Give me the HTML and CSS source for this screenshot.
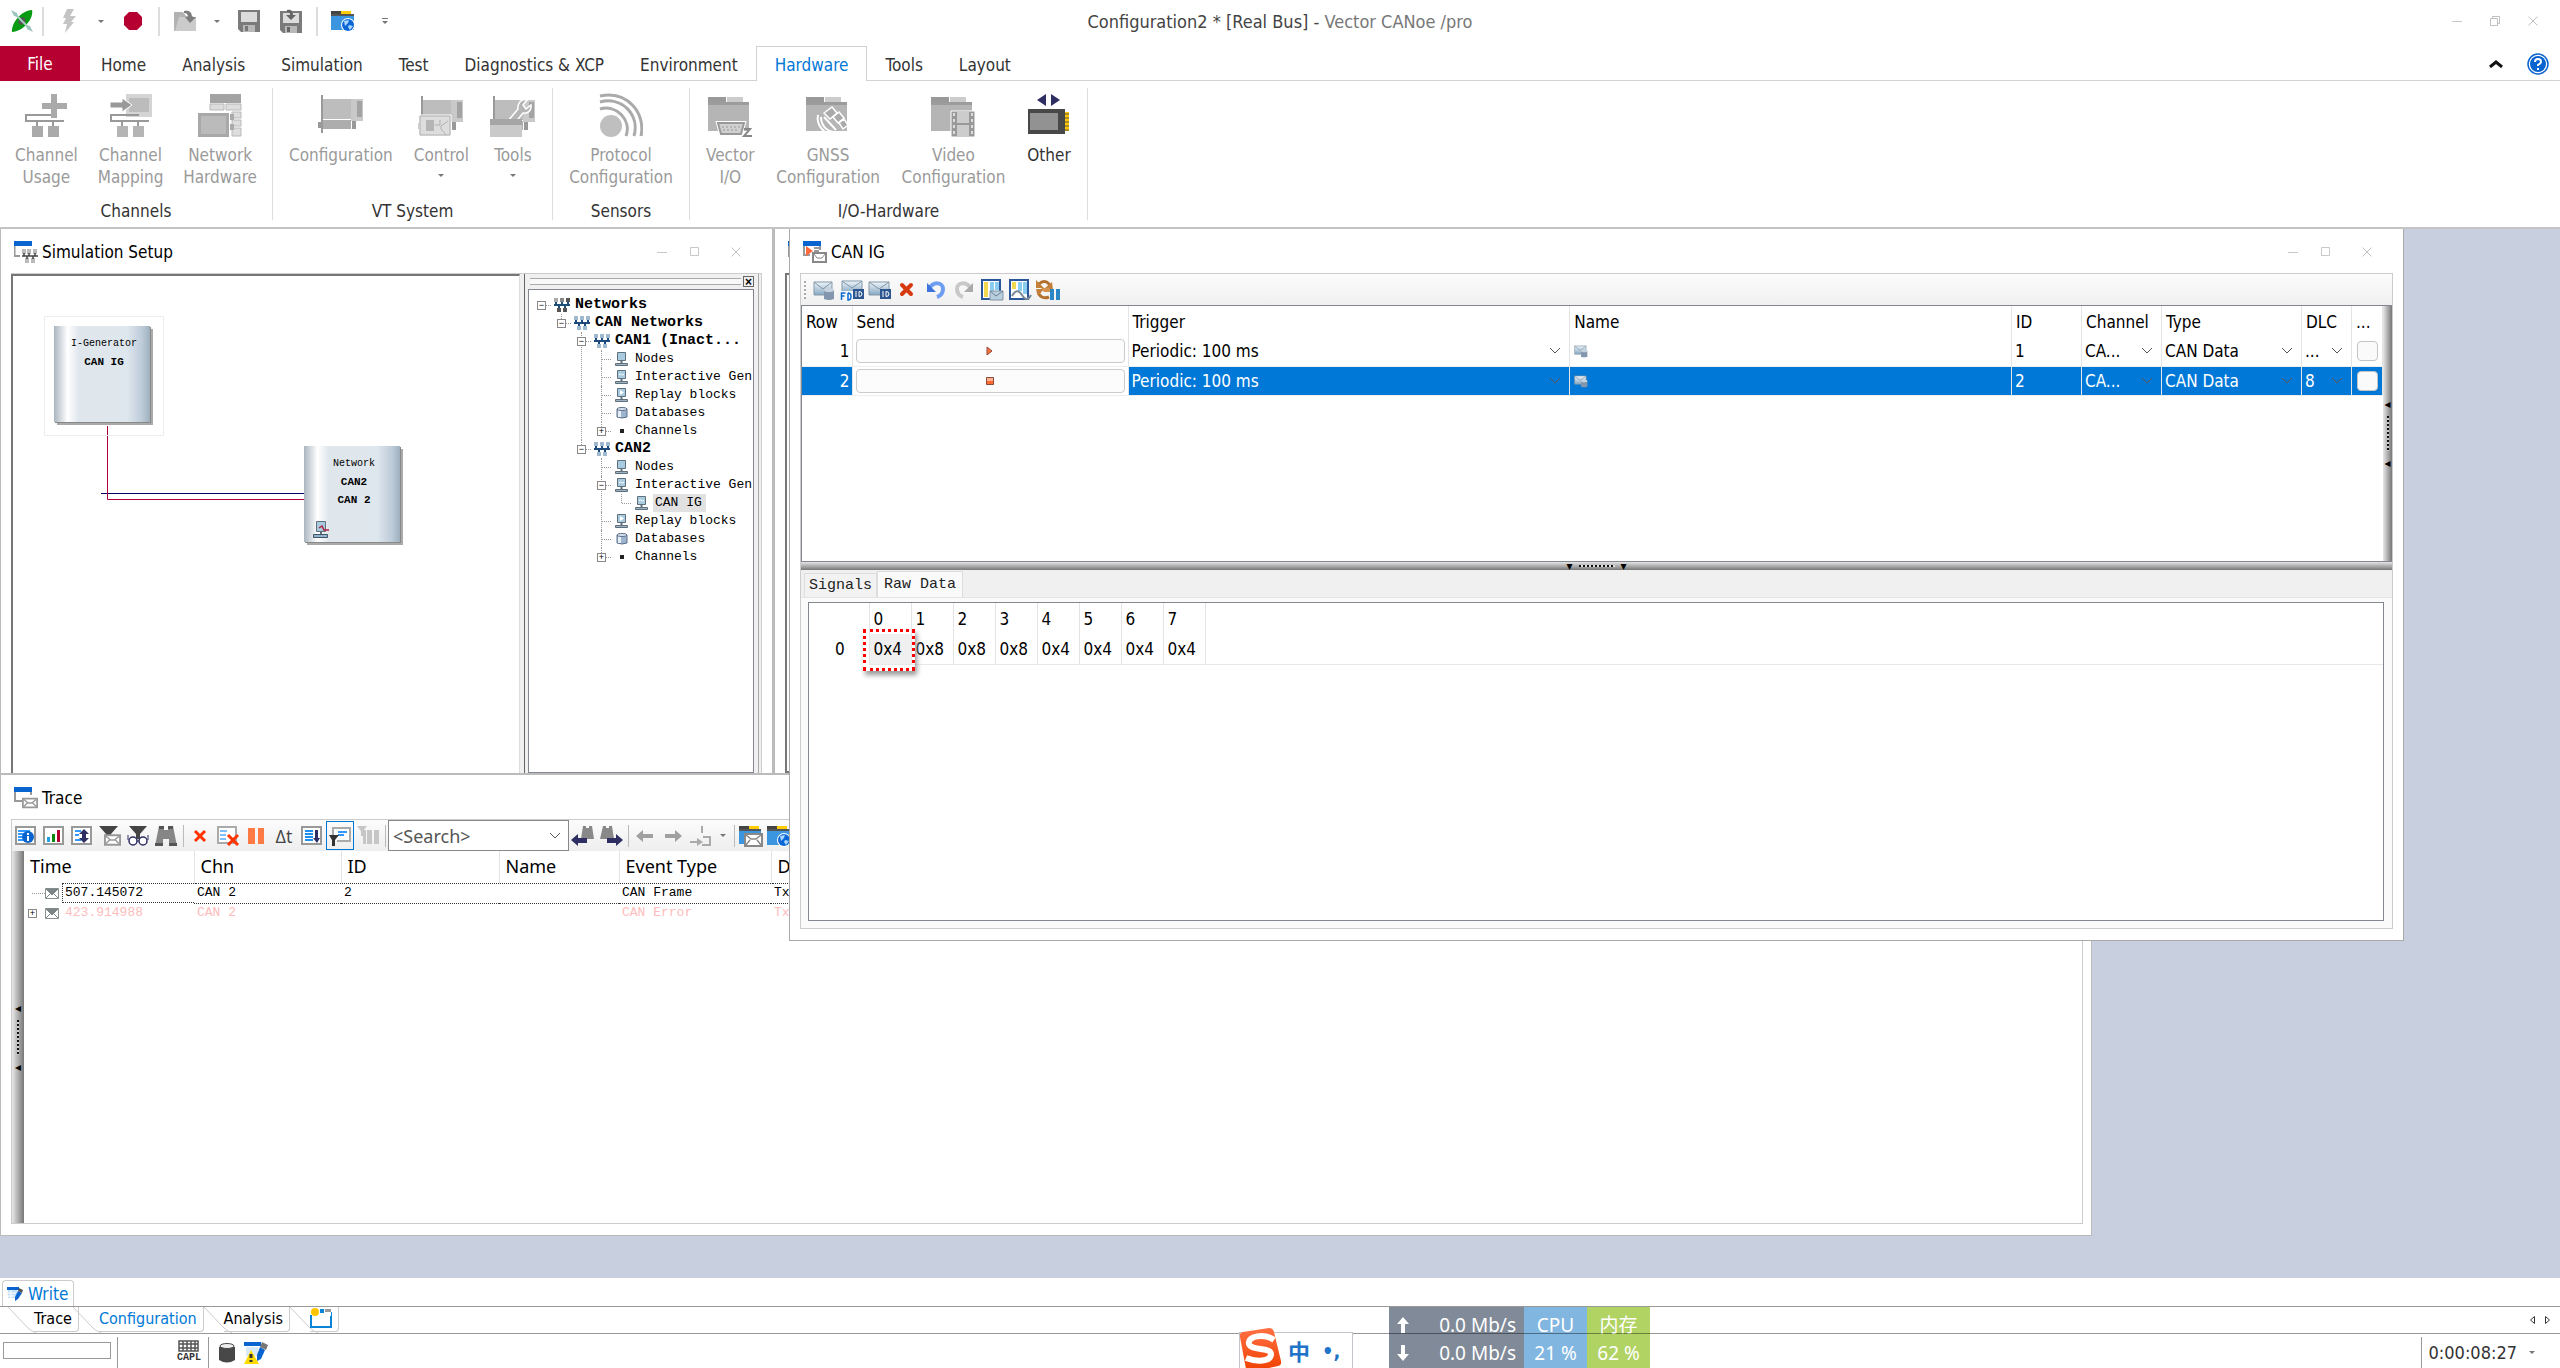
FILE: index.html
```
<!DOCTYPE html>
<html lang="en">
<head>
<meta charset="utf-8">
<title>Configuration2 * [Real Bus] - Vector CANoe /pro</title>
<link rel="stylesheet" href="styles.css">
</head>
<body>
<svg class="sprite" aria-hidden="true">
  <defs>
    <linearGradient id="g-env" x1="0" y1="0" x2="0" y2="1"><stop offset="0" stop-color="#eef5fa"/><stop offset="1" stop-color="#86a8c2"/></linearGradient>
    <linearGradient id="g-orange" x1="0" y1="0" x2="0" y2="1"><stop offset="0" stop-color="#ff7043"/><stop offset="1" stop-color="#f04000"/></linearGradient>
  </defs>
  <symbol id="i-min" viewBox="0 0 10 10"><path d="M0 5.500h10" stroke="#c8c8c8" fill="none"/></symbol>
  <symbol id="i-max" viewBox="0 0 10 10"><path d="M.5.5h8v8h-8z" stroke="#c8c8c8" fill="none"/></symbol>
  <symbol id="i-restore" viewBox="0 0 10 10"><path d="M.5 2.500h7v7h-7zM2.500 2.500v-2h7v7h-2" stroke="#c0c0c0" fill="none"/></symbol>
  <symbol id="i-close" viewBox="0 0 10 10"><path d="M.5.5l9 9M9.500.5l-9 9" stroke="#c0c0c0" fill="none"/></symbol>
  <symbol id="i-down" viewBox="0 0 8 5"><path d="M1 1h6L4 4z" fill="#777"/></symbol>
  <symbol id="i-over" viewBox="0 0 8 8"><path d="M1 1.500h6" stroke="#777"/><path d="M1 4h6L4 7z" fill="#777"/></symbol>
  <symbol id="i-chev" viewBox="0 0 12 8"><path d="M1 1l5 5 5-5" stroke="#555" fill="none"/></symbol>
  <symbol id="i-mail" viewBox="0 0 18 12"><path d="M1 1h16v10H1z" fill="#fff" stroke="#999" stroke-width="2"/><path d="M2 2l5 4h4l5-4M2 10l4-4M16 10l-4-4" fill="none" stroke="#999" stroke-width="1.500"/></symbol>

  <symbol id="i-kayak" viewBox="0 0 22 22"><path d="M21 0C23 8 13 21 1 22 0 14 9 1 21 0z" fill="#089a12"/><ellipse cx="11" cy="11" rx="3" ry="4" transform="rotate(40 11 11)" fill="#555"/><path d="M4 4l14 14" stroke="#a9c9c4" stroke-width="2"/><path d="M0 0l6 3 1 4-4-1zM22 22l-6-3-1-4 4 1z" fill="#9cc5bd"/></symbol>
  <symbol id="i-bolt" viewBox="0 0 16 24"><path d="M6 0h7l-4 7h6l-5 6h3L4 24l2-9H2l3-6H2z" fill="#c4c4c4"/></symbol>
  <symbol id="i-stop" viewBox="0 0 20 20"><path d="M6 1h8l5 5v8l-5 5H6l-5-5V6z" fill="#b70032"/></symbol>
  <symbol id="i-open" viewBox="0 0 24 22"><path d="M1 2h9l3 4h7v15H1z" fill="#b2b2b2"/><path d="M2 21L6 7h17v14z" fill="#cbcbcb"/><path d="M11 1c6-1 8 2 8 6h4l-6 6-5-6h3c0-2-1-4-4-4z" fill="#7d7d7d"/></symbol>
  <symbol id="i-save" viewBox="0 0 22 22"><path d="M0 0h22v22H3l-3-3z" fill="#7b7b7b"/><path d="M3 2h16v10H3z" fill="#dcdcdc"/><path d="M5 15h12v7H5z" fill="#b8b8b8"/><path d="M7 16h3v5H7z" fill="#777"/></symbol>
  <symbol id="i-saveas" viewBox="0 0 22 24"><path d="M0 2h22v22H3l-3-3z" fill="#7b7b7b"/><path d="M3 4h16v10H3z" fill="#dcdcdc"/><path d="M5 17h12v7H5z" fill="#b8b8b8"/><path d="M7 18h3v5H7zM7 1c5-1 6 2 6 5h3l-5 5-5-5h4c0-2 0-3-3-3z" fill="#666"/></symbol>
  <symbol id="i-globe" viewBox="0 0 24 22"><path d="M0 1h10v5H0z" fill="#444"/><path d="M10 1h10v4H10z" fill="#fc0"/><path d="M0 4h23v16H0z" fill="#3c96df"/><path d="M0 4h23v2H0z" fill="#555"/><circle cx="17" cy="15" r="7" fill="#fff"/><circle cx="17" cy="15" r="6" fill="#0a66d6"/><path d="M13 11l5-1-1 3-3 3zM18 15l4 1-3 4-2-3z" fill="#a9d7ff"/></symbol>
  <symbol id="i-foldmail" viewBox="0 0 24 22"><path d="M0 1h10v5H0z" fill="#444"/><path d="M10 1h10v4H10z" fill="#fc0"/><path d="M0 4h22v15H0z" fill="#3c96df"/><path d="M0 4h22v2H0z" fill="#555"/><path d="M6 9h17v12H6z" fill="#fff" stroke="#888" stroke-width="2"/><path d="M7 10l5 4h5l5-4M7 20l4-5M22 20l-4-5" fill="none" stroke="#888" stroke-width="1.500"/></symbol>

  <symbol id="r-usage" viewBox="0 0 44 44"><path d="M2 29v-7h28M2 28h38M13 28v6M29 28v6" stroke="#999" stroke-width="2" fill="none"/><path d="M8 33h11v11H8zM24 33h11v11H24zM27 1h6v9h10v6H33v9h-6v-9H18v-6h9z" fill="#aaa"/></symbol>
  <symbol id="r-map" viewBox="0 0 44 44"><path d="M17 1h26v23H17z" fill="#d4d4d4"/><path d="M20 5h20v14H20z" fill="#bcbcbc"/><path d="M1 9h12V5l10 7-10 7v-4H1z" fill="#999" stroke="#fff" stroke-width="1"/><path d="M2 29v-7h28M2 28h38M13 28v6M29 28v6" stroke="#999" stroke-width="2" fill="none"/><path d="M8 33h11v11H8zM24 33h11v11H24z" fill="#b5b5b5"/></symbol>
  <symbol id="r-nethw" viewBox="0 0 44 44"><path d="M12 1h31v9H12z" fill="#a3a3a3"/><path d="M12 11h14v6H12zM28 11h15v6H28zM34 19h9v6h-9zM34 27h9v6h-9zM34 35h9v8h-9z" fill="#ddd" stroke="#b9b9b9"/><path d="M0 20h31v24H0z" fill="#a9a9a9"/><path d="M3 23h25v18H3z" fill="#bbb"/><path d="M32 21h4v6h-4zM32 31h4v6h-4z" fill="#aaa"/></symbol>
  <symbol id="r-card" viewBox="0 0 46 40"><path d="M4 0v38" stroke="#999" stroke-width="2"/><path d="M5 4h28v20H5z" fill="#bdbdbd"/><path d="M33 4h12v22H33z" fill="#c9c9c9"/><path d="M39 6h5v16h-5z" fill="#a3a3a3"/><path d="M5 25h28v9H5z" fill="#adadad"/><path d="M34 26h4v8h-4zM0 27h4v6H0z" fill="#999"/></symbol>
  <symbol id="r-control" viewBox="0 0 46 44"><use href="#r-card" width="46" height="40" y="3"/><path d="M1 22h32v21H1z" fill="#ddd" stroke="#fff"/><path d="M2 23h30v19H2z" fill="#ddd" stroke="#b0b0b0"/><path d="M8 27h8v11H8z" fill="#b5b5b5"/><path d="M17 32h5v-5M30 28l-7 5v3l5 6" fill="none" stroke="#b0b0b0"/></symbol>
  <symbol id="r-tools" viewBox="0 0 46 44"><use href="#r-card" width="46" height="40" y="3"/><path d="M18 28l10-12c-1-6 4-11 9-9l-4 5 3 4 5-4c1 6-4 9-8 8L24 31z" fill="#b5b5b5" stroke="#fff" stroke-width="1.500"/><path d="M0 26h32v18H0z" fill="#c9c9c9"/><path d="M0 26h32v6H0z" fill="#a5a5a5"/></symbol>
  <symbol id="r-sensor" viewBox="0 0 44 44"><circle cx="12" cy="33" r="11" fill="#bfbfbf"/><path d="M1 16c16-5 32 11 26 27M1 9c22-6 40 13 34 34M1 3c28-6 46 18 41 40" fill="none" stroke="#aaa" stroke-width="3"/></symbol>
  <symbol id="r-fold" viewBox="0 0 44 44"><path d="M0 4h18v6H0z" fill="#999"/><path d="M19 4h16v6H19z" fill="#ccc"/><path d="M0 9h41v29H0z" fill="#b5b5b5"/><path d="M0 9h41v3H0z" fill="#9c9c9c"/></symbol>
  <symbol id="r-vio" viewBox="0 0 44 44"><use href="#r-fold" width="44" height="44"/><path d="M10 30h26l-3 11H13z" fill="#d0d0d0" stroke="#fff" stroke-width="4"/><path d="M10 30h26l-3 11H13z" fill="#d0d0d0" stroke="#999" stroke-width="2"/><path d="M14 34h18M15 37h16" stroke="#999" stroke-dasharray="2 2"/><path d="M36 36h6l-6 7h8" fill="none" stroke="#888" stroke-width="2"/></symbol>
  <symbol id="r-gnss" viewBox="0 0 44 44"><use href="#r-fold" width="44" height="44"/><path d="M12 22c-2 10 6 20 17 20M15 24c0 8 5 14 13 15M18 24l12 13" fill="none" stroke="#fff" stroke-width="2"/><path d="M18 20l8-6 5 6-7 6zM27 24l6-5 5 6-6 5zM33 30l5-4 4 6-5 4z" fill="#aaa" stroke="#fff" stroke-width="1.500"/></symbol>
  <symbol id="r-video" viewBox="0 0 44 44"><use href="#r-fold" width="44" height="44"/><path d="M20 18h24v26H20z" fill="#999" stroke="#fff"/><path d="M26 19h12v11H26zM26 32h12v11H26z" fill="#ccc"/><path d="M23 20v24M41 20v24" stroke="#ddd" stroke-width="2" stroke-dasharray="3 3"/></symbol>
  <symbol id="r-other" viewBox="0 0 44 44"><path d="M19 1v12l-9-6zM24 1v12l9-6z" fill="#2e2e63"/><path d="M1 16h37v25H1z" fill="#484848"/><path d="M3 20h28v17H3z" fill="#929292"/><path d="M38 19h4v19h-4z" fill="#ffc800"/><path d="M38 21h4M38 25h4M38 29h4M38 33h4M38 37h4" stroke="#555"/></symbol>

  <symbol id="w-sim" viewBox="0 0 24 22"><path d="M.5 4v11H6" stroke="#999" fill="none" stroke-width="2"/><path d="M0 0h18v5H0z" fill="#0a64cf"/><path d="M8 8h4v5H8zM13 8h4v5h-4zM19 8h4v5h-4zM11 17h4v5h-4zM17 17h4v5h-4z" fill="#bbb"/><path d="M8 15h16M10 12v3M15 12v3M21 12v3M13 15v3M19 15v3" stroke="#444" stroke-width="1.500"/></symbol>
  <symbol id="w-trace" viewBox="0 0 24 22"><path d="M1 4v10h7M17 4v4" stroke="#999" fill="none" stroke-width="2"/><path d="M0 0h18v5H0z" fill="#0a64cf"/><use href="#i-mail" x="8" y="10" width="16" height="12"/></symbol>
  <symbol id="w-ig" viewBox="0 0 24 22"><path d="M1 4v10h6M17 4v5M11 7h5M11 10h5" stroke="#999" fill="none" stroke-width="2"/><path d="M0 0h18v5H0z" fill="#0a64cf"/><path d="M3 5l7 5-7 5z" fill="#ff6a3c"/><path d="M10 12h13v9H10z" fill="#fff" stroke="#888" stroke-width="2"/><path d="M11 13l3 4h5l3-4" fill="none" stroke="#888"/></symbol>

  <symbol id="t-net0" viewBox="0 0 16 14"><path d="M0 0h4v4H0z" fill="#aaa"/><path d="M6 0h4v4H6z" fill="#888"/><path d="M12 0h4v4h-4z" fill="#555"/><path d="M3 10h4v4H3zM9 10h4v4H9z" fill="#555"/><path d="M0 7h16M2 4v3M8 4v3M14 4v3M5 7v3M11 7v3" stroke="#1d4f78" stroke-width="2"/></symbol>
  <symbol id="t-net" viewBox="0 0 16 14"><path d="M0 0h4v4H0zM6 0h4v4H6zM12 0h4v4h-4zM3 10h4v4H3zM9 10h4v4H9z" fill="#9fb9cf"/><path d="M0 7h16M2 4v3M8 4v3M14 4v3M5 7v3M11 7v3" stroke="#1d4a7c" stroke-width="2"/></symbol>
  <symbol id="t-node" viewBox="0 0 14 14"><path d="M2.500.5h8v8h-8z" fill="#a8cbe0" stroke="#5f6f7c"/><path d="M6.500 9v3" stroke="#5f6f7c" stroke-width="2"/><path d="M.5 11.500h12v2H.5z" fill="#9ab4c4" stroke="#5f6f7c"/></symbol>
  <symbol id="t-gen" viewBox="0 0 14 14"><use href="#t-node" width="14" height="14"/><path d="M4 5q1-2 2.500-.5T9 4" stroke="#fff" fill="none"/></symbol>
  <symbol id="t-play" viewBox="0 0 14 14"><use href="#t-node" width="14" height="14"/><path d="M5 2l4 2.500L5 7z" fill="#fff"/></symbol>
  <symbol id="t-db" viewBox="0 0 14 14"><path d="M2 3h10v8q-5 2-10 0z" fill="#9cb4ce" stroke="#5b6e8a"/><path d="M3 4h3v7H3z" fill="#e6eef6"/><ellipse cx="7" cy="3" rx="5" ry="1.500" fill="#dce8f2" stroke="#5b6e8a"/></symbol>
  <symbol id="t-chan" viewBox="0 0 14 14"><path d="M5 5h4v4H5z" fill="#222"/></symbol>
  <symbol id="t-graph" viewBox="0 0 18 18"><path d="M4.500 1.500h9v10h-9z" fill="#a8cbe0" stroke="#5f6f7c"/><path d="M9 12v3" stroke="#5f6f7c" stroke-width="2"/><path d="M1.500 14.500h14v3h-14z" fill="#8fb5cf" stroke="#456"/><path d="M7 8l3-2 2 4h5" stroke="#b0223b" fill="none" stroke-width="1.500"/></symbol>

  <symbol id="c-db" viewBox="0 0 24 22"><path d="M2 3h18v13H2z" fill="url(#g-env)" stroke="#8297a8"/><path d="M2 3l9 7 9-7" fill="none" stroke="#8297a8"/><path d="M12 11h10v9q-5 2-10 0z" fill="#8396ad"/><ellipse cx="17" cy="11" rx="5" ry="2" fill="#c6d2de"/></symbol>
  <symbol id="c-fd" viewBox="0 0 24 22"><path d="M2 2h20v12H2z" fill="url(#g-env)" stroke="#8297a8"/><path d="M2 2l10 7 10-7" fill="none" stroke="#8297a8"/><path d="M0 12h13v10H0z" fill="#f4f6f8"/><path d="M13 10h11v10H13z" fill="#2d5590"/><path d="M16 12v6M19 12.500v5q3 0 3-2.500t-3-2.500" stroke="#fff" fill="none"/><path d="M1.500 21v-7h4M1.500 17h3M8 14v7q3 0 3-3.500T8 14" stroke="#0a6ad0" stroke-width="1.500" fill="none"/></symbol>
  <symbol id="c-id" viewBox="0 0 24 22"><path d="M1 3h20v13H1z" fill="url(#g-env)" stroke="#8297a8"/><path d="M1 3l10 7 10-7" fill="none" stroke="#8297a8"/><path d="M12 10h11v10H12z" fill="#2d5590"/><path d="M15 12v6M18 12.500v5q3 0 3-2.500t-3-2.500" stroke="#fff" fill="none"/></symbol>
  <symbol id="c-x" viewBox="0 0 24 22"><path d="M6 6l9 9M15 6l-9 9" stroke="#d63a10" stroke-width="4" stroke-linecap="round"/></symbol>
  <symbol id="c-undo" viewBox="0 0 24 22"><path d="M5 10C9 2 19 3 19 10q0 6-6 8" fill="none" stroke="#6f9df0" stroke-width="4"/><path d="M3 4v9h9z" fill="#3d74de"/></symbol>
  <symbol id="c-redo" viewBox="0 0 24 22"><path d="M19 10C15 2 5 3 5 10q0 6 6 8" fill="none" stroke="#c8c8c8" stroke-width="4"/><path d="M21 4v9h-9z" fill="#aaa"/></symbol>
  <symbol id="c-cfg" viewBox="0 0 24 22"><path d="M2 1h18v19H2z" fill="#fff" stroke="#2b569c" stroke-width="2"/><path d="M4 3h4v15H4z" fill="#f1d84e"/><path d="M10 3h4v10h-4zM15 3h4v8h-4z" fill="#8acdf0"/><path d="M10 12h13v9H10z" fill="#b8cfdf" stroke="#8194a5"/><path d="M10 12l6 5 7-5" fill="none" stroke="#6d8192"/></symbol>
  <symbol id="c-wave" viewBox="0 0 24 22"><path d="M2 1h18v19H2z" fill="#fff" stroke="#2b569c" stroke-width="2"/><path d="M4 3h4v7H4z" fill="#f1d84e"/><path d="M10 3h4v9h-4zM15 3h4v12h-4z" fill="#8acdf0"/><path d="M4 17q5-9 10-1t9 0" fill="none" stroke="#7b8a97" stroke-width="2"/></symbol>
  <symbol id="c-cycle" viewBox="0 0 24 22"><path d="M3 5c4-4 9-3 11 2M2 12c1 6 6 8 11 6" fill="none" stroke="#b2702c" stroke-width="3"/><path d="M0 1v8h8zM16 3l1 8-8-2zM0 10h8l-6 7z" fill="#c47f38"/><path d="M5 9h8l3 4H8z" fill="#d4914c"/><path d="M14 10h4v11h-4zM20 10h4v11h-4z" fill="#2b86c5"/></symbol>

  <symbol id="a-frame" viewBox="0 0 22 20"><path d="M1 1h19v17H1z" fill="#fff" stroke="#999" stroke-width="2"/></symbol>
  <symbol id="a-info" viewBox="0 0 22 20"><use href="#a-frame" width="22" height="20"/><path d="M3 5h12M3 8h8M3 11h7M3 14h7" stroke="#39f" stroke-width="2"/><circle cx="13" cy="11" r="6" fill="#0a64cf"/><path d="M13 7v2M13 10v5" stroke="#fff" stroke-width="2"/></symbol>
  <symbol id="a-bars" viewBox="0 0 22 20"><use href="#a-frame" width="22" height="20"/><path d="M4 11h3v5H4z" fill="#1f9fe8"/><path d="M9 8h3v8H9z" fill="#0a8a10"/><path d="M14 4h3v12h-3z" fill="#b70032"/></symbol>
  <symbol id="a-updn" viewBox="0 0 22 20"><use href="#a-frame" width="22" height="20"/><path d="M4 5h6M4 9h4M4 14h6" stroke="#39f" stroke-width="2"/><path d="M13 3l5 5h-3v4h3l-5 5-5-5h3V8H8z" fill="#2e2e63"/></symbol>
  <symbol id="a-filt" viewBox="0 0 22 20"><path d="M0 0h19l-7 8v10H7V8z" fill="#444"/><use href="#i-mail" x="5" y="8" width="17" height="12"/></symbol>
  <symbol id="a-glass" viewBox="0 0 22 20"><path d="M2 0h18l-7 8v5H9V8z" fill="#444"/><circle cx="6" cy="15" r="4" fill="#fff" stroke="#2e2e63" stroke-width="1.500"/><circle cx="16" cy="15" r="4" fill="#fff" stroke="#2e2e63" stroke-width="1.500"/><path d="M1 14V9M21 14V9M10 15h2" stroke="#2e2e63"/></symbol>
  <symbol id="a-bino" viewBox="0 0 22 20"><path d="M4 0h5v4h4V0h5l4 20h-8v-7H8v7H0z" fill="#868686"/><path d="M4 0h5v3H4zM13 0h5v3h-5zM0 17h8v3H0zM14 17h8v3h-8z" fill="#555"/></symbol>
  <symbol id="a-x" viewBox="0 0 22 20"><path d="M6 5l10 10M16 5L6 15" stroke="#ff3300" stroke-width="3"/></symbol>
  <symbol id="a-clear" viewBox="0 0 22 20"><path d="M1 1h18v16H1z" fill="#fff" stroke="#aaa" stroke-width="2"/><path d="M3 5h7M3 9h6M3 13h6" stroke="#7cc0ff" stroke-width="2"/><path d="M11 9l10 10M21 9L11 19" stroke="#ff3300" stroke-width="3"/></symbol>
  <symbol id="a-pause" viewBox="0 0 22 20"><path d="M3 2h7v16H3zM13 2h6v16h-6z" fill="#ff7a45"/></symbol>
  <symbol id="a-scroll" viewBox="0 0 22 20"><use href="#a-frame" width="22" height="20"/><path d="M4 5h8M4 8h8M4 11h8M4 14h8" stroke="#1f8ff0" stroke-width="2"/><path d="M14 4h3v8h2l-3 5-4-5h2z" fill="#2e2e63"/></symbol>
  <symbol id="a-tip" viewBox="0 0 22 20"><path d="M4 9V2h17v13H8" fill="#fff" stroke="#aaa" stroke-width="2"/><path d="M9 6h9M9 9h6" stroke="#39f" stroke-width="2"/><path d="M0 9h10l-4 5v6H3v-6z" fill="#333"/></symbol>
  <symbol id="a-fpause" viewBox="0 0 22 20"><path d="M0 0h10L6 5v5H4V5zM6 4h3v14H6zM10 4h5v14h-5zM17 4h5v14h-5z" fill="#c6c6c6"/></symbol>
  <symbol id="a-prev" viewBox="0 0 24 20"><path d="M12 0h3v2h3V0h3l2 13H10z" fill="#888"/><path d="M0 14l7-6v4h9v5H7v3z" fill="#2e2e63"/></symbol>
  <symbol id="a-next" viewBox="0 0 24 20"><path d="M4 0h3v2h3V0h3l2 13H1z" fill="#888"/><path d="M24 14l-7-6v4H8v5h9v3z" fill="#2e2e63"/></symbol>
  <symbol id="a-left" viewBox="0 0 22 20"><path d="M2 10l7-6v4h10v4H9v4z" fill="#a0a0a0"/></symbol>
  <symbol id="a-right" viewBox="0 0 22 20"><path d="M20 10l-7-6v4H3v4h10v4z" fill="#a0a0a0"/></symbol>
  <symbol id="a-goto" viewBox="0 0 22 20"><path d="M12 0v7M0 16h10M13 11h7v8h-8" stroke="#aaa" stroke-width="2" fill="none"/><path d="M7 12l6 4-6 4z" fill="#aaa"/></symbol>
  <symbol id="a-env" viewBox="0 0 14 11"><path d="M.5.5h13v10H.5z" fill="#fff" stroke="#888f8f"/><path d="M1 1h12l-6 6zM1 10l4-4M13 10L9 6" fill="#7d8686" stroke="#7d8686"/></symbol>

  <symbol id="b-write" viewBox="0 0 16 14"><path d="M0 0h12v3H0z" fill="#0a64cf"/><path d="M1 3h9v8H1z" fill="#c4dff8"/><path d="M1 6h8M1 9h7M4 3v8" stroke="#fff"/><path d="M11 4l4 2-4 6-3 2v-4z" fill="#0a64cf"/><path d="M12 1l4 2-1 3-4-2z" fill="#555"/></symbol>
  <symbol id="b-new" viewBox="0 0 22 20"><path d="M1 7v12h20V5H10" fill="none" stroke="#0a84d6" stroke-width="2"/><path d="M9 3h12v5H9z" fill="#fff"/><circle cx="5" cy="4" r="4" fill="#ffc400"/><path d="M10 1h4v4h-4z" fill="#0a84d6"/><path d="M15 1h6v3h-6z" fill="#999"/></symbol>
  <symbol id="b-grid" viewBox="0 0 22 12"><path d="M1 1h19v10H1zM1 4h19M1 8h19M5 1v10M9 1v10M13 1v10M17 1v10" fill="none" stroke="#555" stroke-width="1.500"/></symbol>
  <symbol id="b-db" viewBox="0 0 16 20"><path d="M0 4v13q8 5 16 0V4z" fill="#484848"/><ellipse cx="8" cy="3" rx="7" ry="2.500" fill="#eee" stroke="#484848"/></symbol>
  <symbol id="b-warn" viewBox="0 0 24 24"><path d="M0 1h17v4H0z" fill="#0a64cf"/><path d="M2 6h12v9H2z" fill="#d8eafc"/><path d="M16 6l5 3-4 9-4 2v-6z" fill="#0a64cf"/><path d="M18 1l6 3-2 5-6-3z" fill="#777"/><path d="M7 9l8 14H0z" fill="#ffdc00"/><path d="M7 13v4M7 19v2" stroke="#333" stroke-width="3"/></symbol>
  <symbol id="b-sogou" viewBox="0 0 44 44"><path d="M2 9Q1 5 5 4L31 0q4 0 5 4l7 29q1 4-3 5l-27 6q-4 1-5-3z" fill="url(#g-orange)"/><path d="M36 12C26 5 9 8 11 16c2 7 22 3 22 10 0 8-15 8-25 4" fill="none" stroke="#fff" stroke-width="6"/></symbol>
</svg>

<header class="titlebar">
  <div class="quick">
    <button aria-label="CANoe" class="q"><svg width="22" height="22"><use href="#i-kayak"/></svg></button><i class="sep"></i>
    <button aria-label="Start" class="q"><svg width="16" height="24"><use href="#i-bolt"/></svg></button>
    <button aria-label="Start options" class="q s"><svg width="8" height="5"><use href="#i-down"/></svg></button>
    <button aria-label="Stop" class="q"><svg width="20" height="20"><use href="#i-stop"/></svg></button><i class="sep"></i>
    <button aria-label="Open" class="q"><svg width="24" height="22"><use href="#i-open"/></svg></button>
    <button aria-label="Recent" class="q s"><svg width="8" height="5"><use href="#i-down"/></svg></button>
    <button aria-label="Save" class="q"><svg width="22" height="22"><use href="#i-save"/></svg></button>
    <button aria-label="Save as" class="q"><svg width="22" height="24"><use href="#i-saveas"/></svg></button><i class="sep"></i>
    <button aria-label="Database" class="q"><svg width="24" height="22"><use href="#i-globe"/></svg></button>
    <button aria-label="Customize" class="q"><svg width="8" height="8"><use href="#i-over"/></svg></button>
  </div>
  <h1>Configuration2 * [Real Bus] - <span>Vector CANoe /pro</span></h1>
  <div class="winctl wide">
    <button aria-label="Minimize"><svg width="10" height="10"><use href="#i-min"/></svg></button>
    <button aria-label="Restore"><svg width="10" height="10"><use href="#i-restore"/></svg></button>
    <button aria-label="Close"><svg width="10" height="10"><use href="#i-close"/></svg></button>
  </div>
</header>

<nav class="tabs">
  <button class="file">File</button>
  <button>Home</button><button>Analysis</button><button>Simulation</button><button>Test</button><button>Diagnostics &amp; XCP</button><button>Environment</button><button class="on">Hardware</button><button>Tools</button><button>Layout</button>
  <div class="help">
    <button aria-label="Collapse ribbon"><svg width="14" height="8" viewBox="0 0 14 8"><path d="M1 7l6-5 6 5" fill="none" stroke="#111" stroke-width="3"/></svg></button>
    <button aria-label="Help"><svg width="22" height="22" viewBox="0 0 22 22"><circle cx="11" cy="11" r="10" fill="#fff" stroke="#0a64cf" stroke-width="1.500"/><circle cx="11" cy="11" r="8" fill="#0a64cf"/><path d="M8 9q0-3 3-3t3 3q0 1-3 3v1M11 15v2" fill="none" stroke="#fff" stroke-width="2"/></svg></button>
  </div>
</nav>

<section class="ribbon">
  <div class="group g1"><div class="items">
    <button><svg width="44" height="44"><use href="#r-usage"/></svg>Channel<br>Usage</button>
    <button><svg width="44" height="44"><use href="#r-map"/></svg>Channel<br>Mapping</button>
    <button><svg width="44" height="44"><use href="#r-nethw"/></svg>Network<br>Hardware</button>
  </div><h2>Channels</h2></div>
  <div class="group g2"><div class="items">
    <button><svg width="46" height="44"><use href="#r-card"/></svg>Configuration</button>
    <button><svg width="46" height="44"><use href="#r-control"/></svg>Control<svg class="dd" width="8" height="5"><use href="#i-down"/></svg></button>
    <button><svg width="46" height="44"><use href="#r-tools"/></svg>Tools<svg class="dd" width="8" height="5"><use href="#i-down"/></svg></button>
  </div><h2>VT System</h2></div>
  <div class="group g3"><div class="items">
    <button><svg width="44" height="44"><use href="#r-sensor"/></svg>Protocol<br>Configuration</button>
  </div><h2>Sensors</h2></div>
  <div class="group g4"><div class="items">
    <button><svg width="44" height="44"><use href="#r-vio"/></svg>Vector<br>I/O</button>
    <button><svg width="44" height="44"><use href="#r-gnss"/></svg>GNSS<br>Configuration</button>
    <button><svg width="44" height="44"><use href="#r-video"/></svg>Video<br>Configuration</button>
    <button class="live"><svg width="44" height="44"><use href="#r-other"/></svg>Other</button>
  </div><h2>I/O-Hardware</h2></div>
</section>

<main class="desk">
  <section class="win w-sim">
    <div class="cap"><svg width="24" height="22"><use href="#w-sim"/></svg><h3>Simulation Setup</h3>
      <div class="winctl"><button aria-label="Minimize"><svg width="10" height="10"><use href="#i-min"/></svg></button><button aria-label="Maximize"><svg width="10" height="10"><use href="#i-max"/></svg></button><button aria-label="Close"><svg width="10" height="10"><use href="#i-close"/></svg></button></div></div>
    <div class="simbody">
      <div class="canvas">
        <svg class="wires" width="310" height="240"><path d="M88 217.500h203" stroke="#000066" fill="none"/><path d="M94.500 150v73.500H291" stroke="#b0003a" fill="none"/></svg>
        <div class="selbox"></div>
        <div class="node n1"><span>I-Generator</span><b>CAN IG</b></div>
        <div class="node n2"><span>Network</span><b>CAN2</b><b>CAN 2</b><svg width="18" height="18"><use href="#t-graph"/></svg></div>
      </div>
      <aside class="panel">
        <div class="grip"><i></i><button aria-label="Close panel">×</button></div>
        <div class="treebox">
          <ul class="tree">
            <li><div class="row b"><i class="x">−</i><svg width="16" height="14"><use href="#t-net0"/></svg><span>Networks</span></div>
            <ul><li><div class="row b"><i class="x">−</i><svg width="16" height="14"><use href="#t-net"/></svg><span>CAN Networks</span></div>
              <ul>
                <li><div class="row b"><i class="x">−</i><svg width="16" height="14"><use href="#t-net"/></svg><span>CAN1 (Inact...</span></div>
                  <ul>
                    <li><div class="row"><i></i><svg width="14" height="14"><use href="#t-node"/></svg><span>Nodes</span></div></li>
                    <li><div class="row"><i></i><svg width="14" height="14"><use href="#t-gen"/></svg><span>Interactive Gen</span></div></li>
                    <li><div class="row"><i></i><svg width="14" height="14"><use href="#t-play"/></svg><span>Replay blocks</span></div></li>
                    <li><div class="row"><i></i><svg width="14" height="14"><use href="#t-db"/></svg><span>Databases</span></div></li>
                    <li><div class="row"><i class="x">+</i><svg width="14" height="14"><use href="#t-chan"/></svg><span>Channels</span></div></li>
                  </ul></li>
                <li><div class="row b"><i class="x">−</i><svg width="16" height="14"><use href="#t-net"/></svg><span>CAN2</span></div>
                  <ul>
                    <li><div class="row"><i></i><svg width="14" height="14"><use href="#t-node"/></svg><span>Nodes</span></div></li>
                    <li><div class="row"><i class="x">−</i><svg width="14" height="14"><use href="#t-gen"/></svg><span>Interactive Gen</span></div>
                      <ul><li><div class="row"><i></i><svg width="14" height="14"><use href="#t-gen"/></svg><span class="hot">CAN IG</span></div></li></ul></li>
                    <li><div class="row"><i></i><svg width="14" height="14"><use href="#t-play"/></svg><span>Replay blocks</span></div></li>
                    <li><div class="row"><i></i><svg width="14" height="14"><use href="#t-db"/></svg><span>Databases</span></div></li>
                    <li><div class="row"><i class="x">+</i><svg width="14" height="14"><use href="#t-chan"/></svg><span>Channels</span></div></li>
                  </ul></li>
              </ul></li></ul></li>
          </ul>
        </div>
      </aside>
    </div>
  </section>

  <section class="win w-back"><div class="cap"><svg width="24" height="22"><use href="#w-sim"/></svg></div><div class="canvas"></div></section>

  <section class="win w-trace">
    <div class="cap"><svg width="24" height="22"><use href="#w-trace"/></svg><h3>Trace</h3></div>
    <div class="tbody">
      <div class="bar">
        <button aria-label="Info"><svg width="22" height="20"><use href="#a-info"/></svg></button>
        <button aria-label="Statistics"><svg width="22" height="20"><use href="#a-bars"/></svg></button>
        <button aria-label="Columns"><svg width="22" height="20"><use href="#a-updn"/></svg></button>
        <button aria-label="Filter"><svg width="22" height="20"><use href="#a-filt"/></svg></button>
        <button aria-label="View filter"><svg width="22" height="20"><use href="#a-glass"/></svg></button>
        <button aria-label="Find"><svg width="22" height="20"><use href="#a-bino"/></svg></button><i class="sep"></i>
        <button aria-label="Delete"><svg width="22" height="20"><use href="#a-x"/></svg></button>
        <button aria-label="Clear"><svg width="22" height="20"><use href="#a-clear"/></svg></button>
        <button aria-label="Pause"><svg width="22" height="20"><use href="#a-pause"/></svg></button>
        <button class="dt">Δt</button>
        <button aria-label="Scroll"><svg width="22" height="20"><use href="#a-scroll"/></svg></button>
        <button aria-label="Tooltip" class="on"><svg width="22" height="20"><use href="#a-tip"/></svg></button>
        <button aria-label="Filter pause"><svg width="22" height="20"><use href="#a-fpause"/></svg></button><i class="sep"></i>
        <span class="combo"><select aria-label="Search"><option>&lt;Search&gt;</option></select><svg width="12" height="8"><use href="#i-chev"/></svg></span>
        <button aria-label="Find previous"><svg width="24" height="20"><use href="#a-prev"/></svg></button>
        <button aria-label="Find next"><svg width="24" height="20"><use href="#a-next"/></svg></button><i class="sep"></i>
        <button aria-label="Back"><svg width="22" height="20"><use href="#a-left"/></svg></button>
        <button aria-label="Forward"><svg width="22" height="20"><use href="#a-right"/></svg></button>
        <button aria-label="Go to"><svg width="22" height="20"><use href="#a-goto"/></svg></button>
        <button aria-label="Go to options" class="s"><svg width="8" height="5"><use href="#i-down"/></svg></button><i class="sep"></i>
        <button aria-label="Messages"><svg width="24" height="22"><use href="#i-foldmail"/></svg></button>
        <button aria-label="Databases"><svg width="24" height="22"><use href="#i-globe"/></svg></button>
      </div>
      <div class="tmain">
        <div class="vsplit"><span class="dots">◂<i></i>◂</span></div>
        <table class="trace">
          <colgroup><col class="c170"><col class="c147"><col class="c158"><col class="c120"><col class="c152"><col></colgroup>
          <thead><tr><th>Time</th><th>Chn</th><th>ID</th><th>Name</th><th>Event Type</th><th>Dir</th></tr></thead>
          <tbody>
            <tr class="cur"><td><div class="first"><i></i><svg width="14" height="11"><use href="#a-env"/></svg><span>507.145072</span></div></td><td>CAN 2</td><td>2</td><td></td><td>CAN Frame</td><td>Tx</td></tr>
            <tr class="err"><td><div class="first"><i class="x">+</i><svg width="14" height="11"><use href="#a-env"/></svg><span>423.914988</span></div></td><td>CAN 2</td><td></td><td></td><td>CAN Error</td><td>Tx</td></tr>
          </tbody>
        </table>
      </div>
    </div>
  </section>

  <section class="win w-ig">
    <div class="cap"><svg width="24" height="22"><use href="#w-ig"/></svg><h3>CAN IG</h3>
      <div class="winctl"><button aria-label="Minimize"><svg width="10" height="10"><use href="#i-min"/></svg></button><button aria-label="Maximize"><svg width="10" height="10"><use href="#i-max"/></svg></button><button aria-label="Close"><svg width="10" height="10"><use href="#i-close"/></svg></button></div></div>
    <div class="igbody">
      <div class="igbar"><i class="handle"></i>
        <button aria-label="Add from database"><svg width="24" height="22"><use href="#c-db"/></svg></button>
        <button aria-label="Add CAN FD frame"><svg width="24" height="22"><use href="#c-fd"/></svg></button>
        <button aria-label="Add CAN frame"><svg width="24" height="22"><use href="#c-id"/></svg></button>
        <button aria-label="Delete"><svg width="24" height="22"><use href="#c-x"/></svg></button>
        <button aria-label="Undo"><svg width="24" height="22"><use href="#c-undo"/></svg></button>
        <button aria-label="Redo"><svg width="24" height="22"><use href="#c-redo"/></svg></button>
        <button aria-label="Frame layout"><svg width="24" height="22"><use href="#c-cfg"/></svg></button>
        <button aria-label="Signal layout"><svg width="24" height="22"><use href="#c-wave"/></svg></button>
        <button aria-label="Cycle pause"><svg width="24" height="22"><use href="#c-cycle"/></svg></button>
      </div>
      <div class="frames">
        <div class="fwrap">
          <table class="ig">
            <colgroup><col class="c50"><col class="c276"><col class="wide"><col class="wide"><col class="c70"><col class="c80"><col class="c140"><col class="c50"><col class="c31"></colgroup>
            <thead><tr><th>Row</th><th>Send</th><th>Trigger</th><th>Name</th><th>ID</th><th>Channel</th><th>Type</th><th>DLC</th><th>...</th></tr></thead>
            <tbody>
              <tr><td class="num">1</td><td class="send"><button aria-label="Start sending"><svg width="8" height="10" viewBox="0 0 8 10"><path d="M1 1l5 4-5 4z" fill="#ff7038" stroke="#8a4a3a"/></svg></button></td>
                <td><span class="dd"><select aria-label="Trigger 1"><option>Periodic: 100 ms</option></select><svg width="12" height="8"><use href="#i-chev"/></svg></span></td>
                <td><svg class="fi" width="16" height="14" viewBox="0 0 24 22"><use href="#c-db"/></svg></td><td>1</td>
                <td><span class="dd"><select aria-label="Channel 1"><option>CA...</option></select><svg width="12" height="8"><use href="#i-chev"/></svg></span></td>
                <td><span class="dd"><select aria-label="Type 1"><option>CAN Data</option></select><svg width="12" height="8"><use href="#i-chev"/></svg></span></td>
                <td><span class="dd"><select aria-label="DLC 1"><option>...</option></select><svg width="12" height="8"><use href="#i-chev"/></svg></span></td>
                <td class="ck"><input type="checkbox" aria-label="BRS 1"></td></tr>
              <tr class="sel"><td class="num">2</td><td class="send"><button aria-label="Stop sending"><svg width="8" height="8" viewBox="0 0 8 8"><path d="M.5.5h7v7h-7z" fill="#ff6a30" stroke="#8a4a3a"/><path d="M1 1h6v3H1z" fill="#ffb090"/></svg></button></td>
                <td><span class="dd"><select aria-label="Trigger 2"><option>Periodic: 100 ms</option></select><svg width="12" height="8"><use href="#i-chev"/></svg></span></td>
                <td><svg class="fi" width="16" height="14" viewBox="0 0 24 22"><use href="#c-db"/></svg></td><td>2</td>
                <td><span class="dd"><select aria-label="Channel 2"><option>CA...</option></select><svg width="12" height="8"><use href="#i-chev"/></svg></span></td>
                <td><span class="dd"><select aria-label="Type 2"><option>CAN Data</option></select><svg width="12" height="8"><use href="#i-chev"/></svg></span></td>
                <td><span class="dd"><select aria-label="DLC 2"><option>8</option></select><svg width="12" height="8"><use href="#i-chev"/></svg></span></td>
                <td class="ck"><input type="checkbox" aria-label="BRS 2"></td></tr>
            </tbody>
          </table>
        </div>
        <div class="vsplit thin"><span class="dots">◂<i></i>◂</span></div>
      </div>
      <div class="hsplit"><b>▾</b><i></i><b>▾</b></div>
      <div class="igtabs"><button>Signals</button><button class="on">Raw Data</button></div>
      <div class="raw">
        <div class="rawbox">
          <table class="bytes">
            <thead><tr><th></th><th>0</th><th>1</th><th>2</th><th>3</th><th>4</th><th>5</th><th>6</th><th>7</th><th class="rest"></th></tr></thead>
            <tbody><tr><th>0</th><td class="mark">0x4</td><td>0x8</td><td>0x8</td><td>0x8</td><td>0x4</td><td>0x4</td><td>0x4</td><td>0x4</td><td class="rest"></td></tr></tbody>
          </table>
        </div>
      </div>
    </div>
  </section>
</main>

<div class="writebar"><button><svg width="16" height="14"><use href="#b-write"/></svg>Write</button></div>
<nav class="sheets">
  <button><svg class="edge" width="28" height="26" viewBox="0 0 28 26"><path d="M0 0l20 21q4 4 8 4.500" fill="none" stroke="#ccc"/></svg><span>Trace</span></button>
  <button class="on"><svg class="edge" width="28" height="26" viewBox="0 0 28 26"><path d="M0 0l20 21q4 4 8 4.500" fill="none" stroke="#ccc"/></svg><span>Configuration</span></button>
  <button class="tight"><svg class="edge" width="28" height="26" viewBox="0 0 28 26"><path d="M0 0l20 21q4 4 8 4.500" fill="none" stroke="#ccc"/></svg><span>Analysis</span></button>
  <button class="tight" aria-label="New desktop"><svg class="edge" width="28" height="26" viewBox="0 0 28 26"><path d="M0 0l20 21q4 4 8 4.500" fill="none" stroke="#ccc"/></svg><span><svg width="22" height="20"><use href="#b-new"/></svg></span></button>
  <div class="scroll"><svg width="22" height="10" viewBox="0 0 22 10"><path d="M5.500 1.500v7l-4-3.500zM16.500 1.500v7l4-3.500z" fill="none" stroke="#333"/></svg></div>
</nav>
<footer class="status">
  <div class="prog"></div>
  <div class="cell capl"><svg width="22" height="12"><use href="#b-grid"/></svg><b>CAPL</b></div>
  <div class="cell icons"><svg width="16" height="20"><use href="#b-db"/></svg><svg width="24" height="24"><use href="#b-warn"/></svg></div>
  <div class="cell time">0:00:08:27<svg width="8" height="5"><use href="#i-down"/></svg></div>
</footer>

<div class="ime"><svg width="44" height="44"><use href="#b-sogou"/></svg><span>中</span><b>•,</b></div>
<div class="meter">
  <div class="net"><p><svg width="14" height="18" viewBox="0 0 14 18"><path d="M7 1l6 7H9v9H5V8H1z" fill="#fff"/></svg>0.0 Mb/s</p><p><svg width="14" height="18" viewBox="0 0 14 18"><path d="M7 17l6-7H9V1H5v9H1z" fill="#fff"/></svg>0.0 Mb/s</p></div>
  <div class="cpu"><p>CPU</p><p>21 %</p></div>
  <div class="mem"><p>内存</p><p>62 %</p></div>
</div>
</body>
</html>
```
FILE: styles.css
```
* { box-sizing: border-box; }
body {
  margin: 0; height: 100vh; display: flex; flex-direction: column; position: relative; overflow: hidden;
  background: #fff; color: #333;
  font: 17px/22px "DejaVu Sans Condensed", "Noto Sans", sans-serif;
}
button, select, input { font: inherit; color: inherit; margin: 0; }
button { border: 0; background: none; padding: 0; display: flex; align-items: center; justify-content: center; white-space: nowrap; }
h1, h2, h3, p, ul { margin: 0; padding: 0; font-size: inherit; font-weight: normal; }
ul { list-style: none; }
svg { display: block; flex: none; }
i { font-style: normal; }
table { border-collapse: collapse; table-layout: fixed; }
th, td { font-weight: normal; text-align: left; padding: 0; }
select { appearance: none; border: 0; background: none; padding: 0; outline: 0; }
.sprite { position: absolute; width: 0; height: 0; }

/* title bar */
.titlebar { display: grid; grid-template-columns: 1fr auto 1fr; align-items: center; height: 46px; flex: none; }
.titlebar h1 { color: #444; font-size: 18px; line-height: 44px; padding-bottom: 2px; }
.titlebar h1 span { color: #777; }
.quick { display: flex; align-items: center; padding: 0 5px 4px; }
.q { width: 42px; height: 30px; }
.q:first-child { width: 33px; }
.q.s { width: 22px; }
.quick .sep { width: 2px; height: 29px; margin: 0 4px; background: #ddd; }
.winctl { display: flex; margin-left: auto; }
.winctl button { width: 33px; height: 24px; }
.winctl button + button + button { width: 50px; }
.winctl.wide button, .winctl.wide button + button + button { width: 38px; }
.titlebar .winctl { padding: 0 8px 4px 0; }

/* ribbon */
.tabs { display: flex; height: 35px; flex: none; border-bottom: 1px solid #d2d2d2; }
.tabs > button { padding: 3px 18px 0; height: 34px; }
.tabs > .file { width: 80px; height: 35px; padding: 0; margin-right: 3px; background: #b70032; color: #fff; }
.tabs > .on { height: 35px; padding-bottom: 1px; border: 1px solid #d2d2d2; border-bottom: 0; background: #fff; color: #0078d7; }
.help { display: flex; align-items: center; gap: 24px; margin-left: auto; padding: 2px 11px 0 0; }
.ribbon { display: flex; height: 148px; flex: none; border-bottom: 2px solid #c4c4c4; padding: 7px 0; color: #9a9a9a; }
.group { display: flex; flex-direction: column; border-right: 1px solid #ddd; height: 132px; }
.group h2 { margin-top: auto; height: 20px; text-align: center; color: #333; }
.items { display: flex; align-items: flex-start; justify-content: space-between; }
.items button { flex-direction: column; line-height: 22px; padding-top: 5px; }
.items button > svg { margin-bottom: 7px; }
.items .dd { margin-top: 7px; }
.items .live { color: #333; }
.g1 { width: 273px; } .g1 .items { padding: 0 15px; }
.g2 { width: 280px; } .g2 .items { padding: 0 16px; }
.g3 { width: 137px; } .g3 .items { justify-content: center; }
.g4 { width: 398px; } .g4 .items { padding: 0 16px; }

/* desktop and child windows */
.desk { position: relative; flex: 1; background: #c8d0e0; overflow: hidden; }
.win { position: absolute; background: #fff; border: 1px solid #bbb; border-top: 0; display: flex; flex-direction: column; color: #000; }
.cap { display: flex; align-items: center; gap: 4px; height: 44px; padding: 2px 11px 0 13px; flex: none; }
.w-sim { left: 0; top: 0; width: 774px; height: 545px; border-right-width: 2px; overflow: hidden; }
.w-back { left: 774px; top: 0; width: 780px; height: 545px; }
.w-back .canvas { flex: 1; margin: 0 10px; border: 2px solid #777; }
.w-trace { left: 0; right: 468px; top: 545px; bottom: 42px; border-top: 1px solid #bbb; }
.w-ig { left: 789px; right: 156px; top: 0; height: 712px; border-color: #aaa; }

/* simulation setup */
.simbody { display: flex; flex: 1; margin: 0 10px; min-height: 0; border-top: 1px solid #ccc; background: #f0f0f0; border-right: 1px solid #ccc; }
.simbody .canvas { position: relative; flex: 1; background: #fff; border: 2px solid #777; border-right: 1px solid #ddd; border-bottom: 0; }
.wires { position: absolute; left: 0; top: 0; }
.selbox { position: absolute; left: 31px; top: 40px; width: 120px; height: 120px; border: 1px solid #eee; }
.node {
  position: absolute; width: 96px; height: 96px; padding: 9px 0 0 4px; text-align: center;
  font: 10px/18px "Liberation Mono", monospace;
  background: linear-gradient(90deg, #a9b5bf, #fff 14%, #dfe6ec 26%, #dfe7ee 76%, #bccad8 92%, #9fb0bd);
  box-shadow: 1px 1px 0 #888, 3px 3px 0 #aaa;
}
.node span, .node b { display: block; }
.node b { font-size: 11px; }
.n1 { left: 41px; top: 50px; }
.n2 { left: 291px; top: 170px; }
.n2 svg { margin: 11px 0 0 4px; }
.panel { width: 235px; display: flex; flex-direction: column; border-left: 1px solid #666; border-right: 1px solid #aaa; margin: 0 2px 0 4px; padding: 0 4px 0 3px; }
.grip { display: flex; height: 15px; align-items: center; gap: 2px; }
.grip i { flex: 1; height: 7px; border: 1px solid #aaa; border-width: 1px 0; background: #f8f8f8; margin-left: 2px; }
.grip button { width: 11px; height: 11px; border: 1px solid #666; background: #eee; font: bold 12px/8px "Liberation Sans", sans-serif; color: #000; }
.treebox { flex: 1; background: #fff; border: 1px solid #828790; overflow: hidden; }
.tree { padding: 6px 0 0 2px; font: 13px/18px "Liberation Mono", monospace; }
.tree ul { margin-left: 20px; }
.tree li { position: relative; }
.tree li::before { content: ""; position: absolute; left: 10px; top: 0; height: 100%; border-left: 1px dotted #999; }
.tree li:last-child::before { height: 9px; }
.tree > li::before { display: none; }
.row { display: flex; align-items: center; height: 18px; white-space: nowrap; background: repeating-linear-gradient(90deg, #999 0 1px, #fff 1px 2px) 11px 9px / 20px 1px no-repeat; }
.row > svg { width: 20px; background: #fff; }
.row > span { padding-left: 3px; }
.row > .hot { padding: 0 4px 0 2px; margin-left: 1px; background: #e1e1e1; }
.row.b { font-size: 15px; font-weight: bold; }
.row > i { width: 20px; height: 9px; flex: none; margin-right: 1px; }
.row > .x, .first > .x { position: relative; z-index: 1; width: 9px; height: 9px; margin: 0 6px; border: 1px solid #888; background: #fff; font: 9px/7px "Liberation Sans", sans-serif; text-align: center; color: #000; }

/* trace */
.tbody { display: flex; flex-direction: column; flex: 1; margin: 0 8px 11px 10px; border: 1px solid #ccc; }
.bar { display: flex; align-items: center; height: 31px; flex: none; background: linear-gradient(#fcfcfc, #eee); }
.bar button { width: 28px; height: 29px; flex: none; }
.bar .s { width: 16px; }
.bar .on { border: 1px solid #0078d7; }
.bar .sep { width: 1px; height: 22px; margin: 0 2px 0 3px; background: #bbb; }
.bar .dt { font-family: "Open Sans", sans-serif; font-size: 18px; color: #444; }
.combo { display: flex; align-items: center; width: 181px; height: 31px; border: 1px solid #888; background: #fff; color: #555; padding: 0 7px 0 4px; }
.combo select { flex: 1; min-width: 0; font: 18px/24px "Noto Sans", sans-serif; }
.tmain { display: flex; flex: 1; }
.vsplit { width: 12px; flex: none; background: linear-gradient(90deg, #e8e8e8, #777); display: flex; align-items: center; justify-content: center; }
.dots { display: flex; flex-direction: column; align-items: center; font: 12px/10px "DejaVu Sans", sans-serif; color: #000; gap: 7px; }
.dots i { width: 2px; height: 35px; background: repeating-linear-gradient(#111 0 2px, #ccc 2px 4px); }
.trace { flex: 1; align-self: flex-start; font: 13px/18px "Liberation Mono", monospace; white-space: nowrap; }
.trace th { height: 32px; padding: 0 0 2px 6px; font: 18px/24px "Noto Sans", sans-serif; border-right: 1px solid #e4e4e4; }
.trace th:last-child { border-right: 0; }
.trace td { height: 20px; padding-left: 3px; }
.trace td:first-child { padding: 0; }
.cur td { border-top: 1px dotted #333; border-bottom: 1px dotted #333; }
.cur td:first-child { border: 0; }
.first { display: flex; align-items: center; height: 20px; }
.first > i { width: 13px; margin-left: 8px; border-top: 1px dotted #999; height: 1px; }
.first > .x { margin: 0 8px 0 4px; }
.first > span { margin-left: 3px; flex: 1; padding-left: 3px; line-height: 18px; }
.cur .first > span { border: 1px dotted #333; border-right: 0; padding-left: 2px; }
.err { color: #ffbcbc; }
.c170 { width: 170px; } .c147 { width: 147px; } .c158 { width: 158px; } .c120 { width: 120px; } .c152 { width: 152px; }

/* interactive generator */
.igbody { display: flex; flex-direction: column; flex: 1; margin: 0 10px 11px; border: 1px solid #ccc; background: #f0f0f0; }
.igbar { display: flex; align-items: center; height: 31px; padding-left: 3px; background: linear-gradient(#fcfcfc, #f0f0f0); }
.igbar button { width: 28px; }
.handle { width: 2px; height: 18px; margin-right: 4px; background: repeating-linear-gradient(#aaa 0 2px, #fff 2px 4px); }
.frames { display: flex; height: 257px; border: 1px solid #828790; border-right: 0; }
.fwrap { flex: 1; background: #fff; }
.vsplit.thin { width: 9px; }
.ig { width: 100%; white-space: nowrap; }
.ig th { height: 31px; padding-left: 4px; border-right: 1px solid #e4e4e4; }
.ig td { height: 29px; padding-left: 3px; border-right: 1px solid #e4e4e4; border-bottom: 1px solid #eee; }
.ig .num { text-align: right; padding: 0 2px 0 0; }
.ig .send { padding: 0 3px; background: #fff; }
.send button { width: 100%; height: 24px; border: 1px solid #ccc; border-radius: 4px; background: #fcfcfc; }
.ig .sel td:not(.send) { background: #0078d7; color: #fff; }
.ig .dd { display: flex; align-items: center; padding-right: 8px; }
.ig .dd select { flex: 1; min-width: 0; width: 0; }
.ig td.ck { padding-left: 5px; }
.ck input { appearance: none; display: block; width: 21px; height: 20px; border: 1px solid #c4c4c4; border-radius: 4px; background: #fafafa; }
.c50 { width: 50px; } .c276 { width: 276px; } .c70 { width: 70px; } .c80 { width: 80px; } .c140 { width: 140px; } .c31 { width: 31px; }
.hsplit { height: 8px; display: flex; align-items: center; justify-content: center; gap: 6px; background: linear-gradient(#e4e4e4, #777); font: 12px/8px "DejaVu Sans", sans-serif; color: #000; }
.hsplit b { font-weight: normal; }
.hsplit i { width: 36px; height: 2px; background: repeating-linear-gradient(90deg, #111 0 2px, #ddd 2px 4px); }
.igtabs { display: flex; align-items: flex-end; height: 27px; padding-left: 3px; font: 15px/20px "Liberation Mono", monospace; }
.igtabs button { height: 24px; padding: 0 4px; border: 1px solid #ddd; border-bottom: 0; background: #f2f2f2; color: #222; }
.igtabs .on { height: 26px; padding: 0 6px; background: #fafafa; }
.raw { flex: 1; display: flex; padding: 4px 8px 7px 7px; background: #fafafa; border-top: 1px solid #e4e4e4; }
.rawbox { flex: 1; background: #fff; border: 1px solid #828790; }
.bytes { width: 100%; }
.bytes th, .bytes td { width: 42px; height: 31px; padding-left: 4px; border-right: 1px solid #e4e4e4; }
.bytes td, .bytes tbody th { height: 30px; border-bottom: 1px solid #e8e8e8; }
.bytes th:first-child { width: 60px; padding-left: 26px; border-bottom: 0; }
.bytes .rest { width: auto; border-right: 0; }
.mark { position: relative; background: #f0f0f0; }
.mark::after { content: ""; position: absolute; left: -7px; top: -5px; right: -4px; bottom: -7px; border: 3px dotted red; box-shadow: 2px 4px 5px #999; }

/* lower bars */
.writebar { height: 29px; flex: none; display: flex; padding: 2px 2px 0; border-bottom: 1px solid #999; }
.writebar button { gap: 5px; padding: 0 5px 0 4px; border: 1px solid #ccc; border-bottom: 0; border-radius: 4px 4px 0 0; color: #0078d7; }
.sheets { display: flex; height: 27px; flex: none; padding-left: 8px; border-bottom: 1px solid #999; color: #000; font-size: 16px; }
.sheets button { height: 26px; align-items: flex-start; }
.sheets span { height: 25px; line-height: 24px; padding: 0 6px 0 0; margin-left: -2px; border: 1px solid #ccc; border-width: 0 1px 1px 0; border-radius: 0 0 4px 0; }
.sheets .on { margin-left: -6px; color: #0078d7; }
.sheets .tight span { margin-left: -8px; }
.sheets span svg { margin-top: 1px; }
.scroll { margin-left: auto; padding: 8px 9px 0 0; }
.status { display: flex; align-items: stretch; height: 34px; flex: none; color: #333; }
.prog { width: 108px; height: 17px; margin: 8px 6px 0 3px; border: 1px solid #999; }
.cell { display: flex; align-items: center; border-left: 1px solid #999; margin-top: 3px; }
.capl { flex-direction: column; width: 91px; padding: 3px 0 0 52px; }
.capl b { font: bold 10px/10px "Liberation Mono", monospace; margin-top: 1px; }
.icons { gap: 9px; padding-left: 10px; }
.time { margin-left: auto; gap: 11px; padding: 0 24px 0 7px; font-size: 18px; }

/* floating desktop widgets */
.ime { position: absolute; left: 1239px; bottom: -7px; height: 43px; display: flex; align-items: center; gap: 6px; width: 114px; border: 1px solid #c4c4cc; background: #fff; color: #1f74c8; }
.ime svg { margin: -8px 0 0 -2px; }
.ime span { font: bold 22px/36px "Noto Sans CJK SC", sans-serif; padding-bottom: 7px; }
.ime b { font-size: 20px; padding: 0 0 6px 6px; }
.meter { position: absolute; left: 1389px; bottom: 0; height: 61px; display: flex; color: #fff; font: 19px/28px "Noto Sans", "Noto Sans CJK SC", sans-serif; text-align: center; }
.meter > div { padding-top: 4px; background-image: linear-gradient(rgba(0,0,0,.4), rgba(0,0,0,.4)); background-size: 100% 1px; background-position: 0 26px; background-repeat: no-repeat; }
.meter .net { width: 135px; background-color: #808a98; }
.net p { display: flex; align-items: center; justify-content: space-between; padding: 0 8px 0 7px; }
.meter .cpu { width: 63px; background-color: #80b6e0; }
.meter .mem { width: 63px; background-color: #b1d364; }
```
